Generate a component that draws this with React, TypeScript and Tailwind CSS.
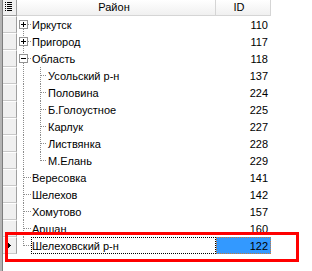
type Row = { name: string; id: number; level: 0 | 1; box?: '+' | '-'; selected?: boolean };

const rows: Row[] = [
  { name: 'Иркутск', id: 110, level: 0, box: '+' },
  { name: 'Пригород', id: 117, level: 0, box: '+' },
  { name: 'Область', id: 118, level: 0, box: '-' },
  { name: 'Усольский р-н', id: 137, level: 1 },
  { name: 'Половина', id: 224, level: 1 },
  { name: 'Б.Голоустное', id: 225, level: 1 },
  { name: 'Карлук', id: 227, level: 1 },
  { name: 'Листвянка', id: 228, level: 1 },
  { name: 'М.Елань', id: 229, level: 1 },
  { name: 'Вересовка', id: 141, level: 0 },
  { name: 'Шелехов', id: 142, level: 0 },
  { name: 'Хомутово', id: 157, level: 0 },
  { name: 'Аршан', id: 160, level: 0 },
  { name: 'Шелеховский р-н', id: 122, level: 0, selected: true },
];

const dot = { stroke: '#8c8c8c', strokeWidth: 1, strokeDasharray: '1 1', shapeRendering: 'crispEdges' as const };

function Guides({ row, index }: { row: Row; index: number }) {
  const w = row.level === 0 ? 14 : 30;
  const first = index === 0;
  const last = index === rows.length - 1;
  const lastChild = row.level === 1 && rows[index + 1]?.level !== 1;
  return (
    <svg width={w} height={17} className="shrink-0">
      {/* root line */}
      {row.box ? (
        <>
          {!first && <line x1={6.5} y1={0} x2={6.5} y2={4} {...dot} />}
          <line x1={6.5} y1={13} x2={6.5} y2={17} {...dot} />
        </>
      ) : (
        <line x1={6.5} y1={0} x2={6.5} y2={last ? 9 : 17} {...dot} />
      )}
      {row.level === 0 && !row.box && <line x1={7} y1={8.5} x2={14} y2={8.5} {...dot} />}
      {row.level === 0 && row.box && <line x1={11} y1={8.5} x2={14} y2={8.5} {...dot} />}
      {row.level === 1 && (
        <>
          <line x1={23.5} y1={0} x2={23.5} y2={lastChild ? 9 : 17} {...dot} />
          <line x1={24} y1={8.5} x2={30} y2={8.5} {...dot} />
        </>
      )}
      {row.box && (
        <g shapeRendering="crispEdges">
          <rect x={2.5} y={4.5} width={8} height={8} fill="#fff" stroke="#939393" />
          <line x1={4} y1={8.5} x2={9} y2={8.5} stroke="#000" />
          {row.box === '+' && <line x1={6.5} y1={6} x2={6.5} y2={11} stroke="#000" />}
        </g>
      )}
    </svg>
  );
}

export default function App() {
  return (
    <div className="relative flex h-[271px] w-[312px] overflow-hidden bg-white font-['Liberation_Sans',Arial,sans-serif] text-[11px] text-black">
      {/* control border */}
      <div className="h-full w-[3px] shrink-0 border-r border-[#7d7d7d] bg-[#b4b4b4]" />

      <div className="flex flex-col">
        {/* Header */}
        <div className="flex h-[16px]">
          <div className="flex w-[14px] shrink-0 items-start border-r border-b border-[#a0a0a0] bg-[#f0f0f0] pt-[2px] pl-[2px]">
            <svg width="8" height="9" shapeRendering="crispEdges">
              {[0, 2, 4, 6, 8].map((y) => (
                <g key={y}>
                  <rect x="0" y={y} width="1" height="1" fill="#000" />
                  <rect x="2" y={y} width="5" height="1" fill="#000" />
                </g>
              ))}
            </svg>
          </div>
          <div className="flex w-[199px] items-center justify-center border-r border-b border-[#d5d5d5] bg-linear-to-b from-white to-[#f0f0f0] pr-[4px] leading-[15px]">
            Район
          </div>
          <div className="flex w-[55px] items-center justify-center border-r border-b border-[#d5d5d5] bg-linear-to-b from-white to-[#f0f0f0] pr-[8px] leading-[15px]">
            ID
          </div>
        </div>

        {/* Rows */}
        {rows.map((row, i) => (
          <div key={row.id} className="flex h-[17px]">
            <div className="flex w-[14px] shrink-0 items-center border-t border-r border-b border-t-white border-r-[#a0a0a0] border-b-[#c9c9c9] bg-[#f0f0f0] pl-[3px]">
              {row.selected && (
                <svg width="6" height="9" shapeRendering="crispEdges">
                  <polygon points="0,0 5,4.5 0,9" fill="#000" />
                </svg>
              )}
            </div>
            <div className="flex w-[199px] shrink-0">
              <Guides row={row} index={i} />
              <div
                className={`flex flex-1 border pt-px leading-[15px] whitespace-nowrap ${
                  row.selected ? 'border-dotted border-black' : 'border-transparent'
                }`}
              >
                {row.name}
              </div>
            </div>
            <div
              className={`flex w-[55px] shrink-0 justify-end border pt-px pr-[2px] leading-[15px] ${
                row.selected ? 'border-dotted border-[#c87a3c] bg-[#3399ff]' : 'border-transparent'
              }`}
            >
              {row.id}
            </div>
          </div>
        ))}
      </div>

      {/* annotation */}
      <div className="absolute top-[232px] left-[5px] h-[30px] w-[294px] border-[3px] border-[#ff0000]" />
    </div>
  );
}
